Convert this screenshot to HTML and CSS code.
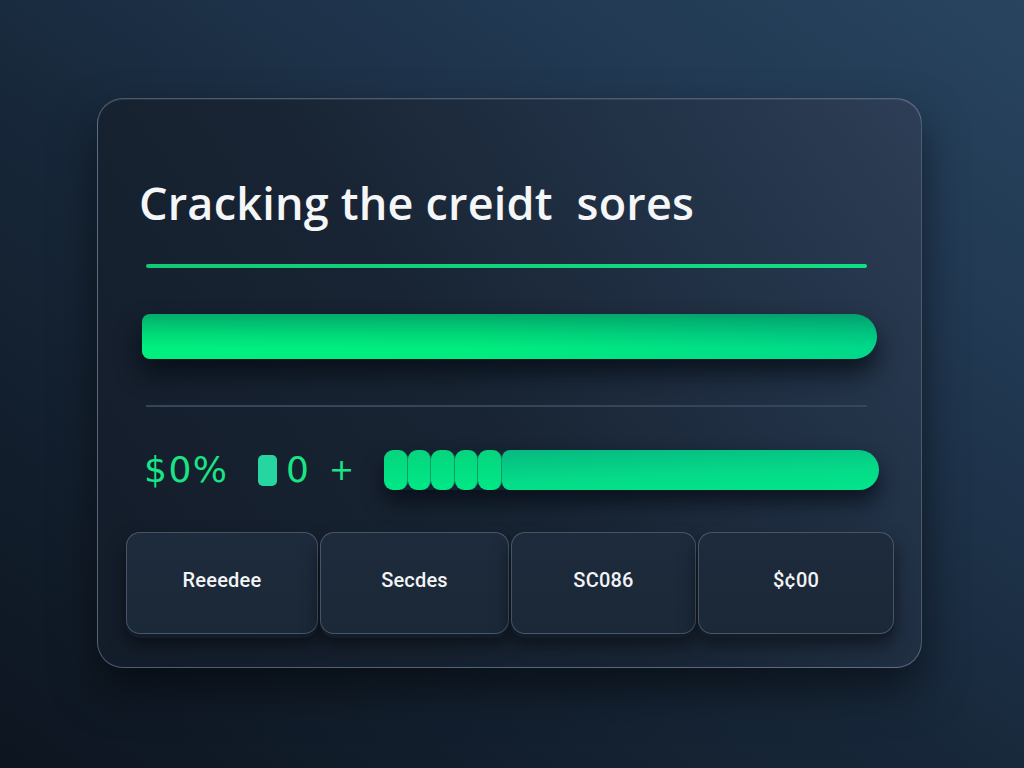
FILE: index.html
```html
<!DOCTYPE html>
<html>
<head>
<meta charset="utf-8">
<link rel="stylesheet" href="styles.css">
</head>
<body>
<main class="stage">
  <section class="card">
    <h1 class="title">Cracking the creidt&nbsp; sores</h1>
    <div class="accent-line"></div>
    <div class="big-bar"></div>
    <div class="divider"></div>
    <div class="stat-row">
      <span class="stat-pct">$0%</span>
      <span class="chip"></span>
      <span class="stat-zero">0</span>
      <span class="stat-plus">+</span>
      <div class="seg-bar">
        <span class="seg"></span><span class="seg"></span><span class="seg"></span><span class="seg"></span><span class="seg"></span>
        <span class="seg-long"></span>
      </div>
    </div>
    <div class="buttons">
      <div class="btn b1">Reeedee</div>
      <div class="btn b2">Secdes</div>
      <div class="btn b3">SC086</div>
      <div class="btn b4">$¢00</div>
    </div>
  </section>
</main>
</body>
</html>
```

FILE: styles.css
```css
* { box-sizing: border-box; }
html, body { margin: 0; padding: 0; }
body {
  width: 1024px;
  height: 768px;
  overflow: hidden;
  background: linear-gradient(35deg, #0d1520 0%, #172739 45%, #213852 75%, #28445f 100%);
  font-family: "Open Sans", "DejaVu Sans", sans-serif;
}
.stage {
  padding: 98px 102px 0 97px;
}
.card {
  width: 825px;
  height: 570px;
  border-radius: 26px;
  border: 1px solid rgba(170, 190, 215, 0.38);
  background: linear-gradient(55deg, #131c29 0%, #182433 45%, #223247 75%, #2d3e56 100%);
  box-shadow: 0 22px 44px rgba(0, 0, 0, 0.5), inset 0 1px 0 rgba(255,255,255,0.08);
  padding: 0 0 0 28px;
  display: flex;
  flex-direction: column;
}
.title {
  margin: 76px 0 0 13px;
  color: #f4f6f8;
  font-family: "Open Sans", sans-serif;
  font-weight: 600;
  font-size: 45px;
  letter-spacing: 0.2px;
  line-height: 56px;
  height: 56px;
}
.accent-line {
  margin: 33px 0 0 20px;
  width: 721px;
  height: 4px;
  border-radius: 2px;
  background: linear-gradient(90deg, #12c976, #0fe081);
}
.big-bar {
  margin: 46px 0 0 16px;
  width: 735px;
  height: 45px;
  border-radius: 8px 23px 23px 8px;
  background:
    linear-gradient(180deg, rgba(5, 90, 80, 0.45) 0%, rgba(5, 90, 80, 0.15) 45%, rgba(0,0,0,0) 75%),
    linear-gradient(90deg, #00f080 0%, #00ec7e 45%, #00d88a 100%);
  box-shadow: 0 14px 24px rgba(3, 10, 18, 0.75);
}
.divider {
  margin: 46px 0 0 20px;
  width: 721px;
  height: 2px;
  background: #36465a;
}
.stat-row {
  margin: 42px 0 0 18px;
  display: flex;
  align-items: center;
  height: 42px;
}
.stat-pct, .stat-zero, .stat-plus {
  color: #1ae586;
  font-family: "DejaVu Sans", sans-serif;
  font-weight: 400;
  line-height: 42px;
}
.stat-pct { width: 88px; font-size: 36px; letter-spacing: 1.5px; text-align: left; }
.chip {
  margin-left: 26px;
  width: 19px;
  height: 31px;
  border-radius: 5px;
  background: #25d6a1;
}
.stat-zero { margin-left: 9px; width: 22px; font-size: 36px; text-align: center; }
.stat-plus { margin-left: 21px; width: 24px; font-size: 30px; text-align: center; }
.seg-bar {
  margin-left: 31px;
  display: flex;
  height: 40px;
  box-shadow: 0 12px 20px rgba(3, 10, 18, 0.7);
  border-radius: 10px 20px 20px 10px;
}
.seg {
  width: 23.5px;
  height: 40px;
  border-radius: 9px;
  background: linear-gradient(180deg, #06d47e, #00e886);
  border-right: 1px solid #0a9a62;
}
.seg-long {
  width: 377px;
  height: 40px;
  border-radius: 8px 20px 20px 8px;
  background: linear-gradient(178deg, #07b981 0%, #05db88 60%, #00e58c 100%);
}
.buttons {
  margin: 41px 0 0 0;
  display: flex;
  gap: 2px;
}
.btn {
  height: 102px;
  border-radius: 14px;
  border: 1px solid rgba(170, 190, 210, 0.3);
  background: linear-gradient(180deg, #1d2b3c 0%, #1a2838 100%);
  box-shadow: 0 4px 0 #131c28, 0 10px 18px rgba(0, 0, 0, 0.5);
  display: flex;
  align-items: center;
  justify-content: center;
  padding-bottom: 6px;
  color: #f2f4f6;
  font-family: "Roboto", "DejaVu Sans", sans-serif;
  font-weight: 500;
  font-size: 20px;
  letter-spacing: 0.2px;
}
.b1 { width: 192px; }
.b2 { width: 189px; }
.b3 { width: 185px; }
.b4 { width: 196px; }
```
